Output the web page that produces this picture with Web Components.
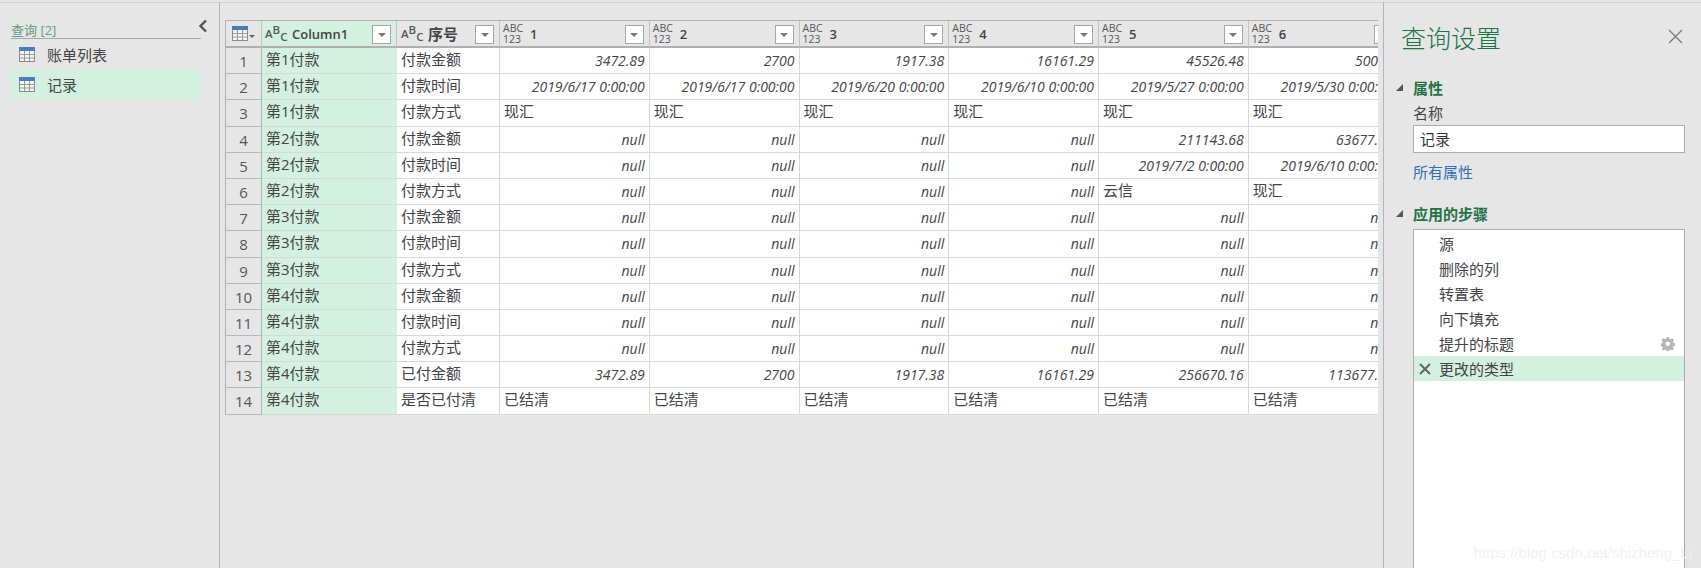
<!DOCTYPE html>
<html lang="zh">
<head>
<meta charset="utf-8">
<title>查询设置</title>
<style>
  html, body { margin: 0; height: 100%; overflow: hidden; background: #e6e6e6; }
  body { font-family: "Open Sans", "Noto Sans CJK SC", sans-serif; color: #444; }
  #app { display: flex; height: 568px; box-sizing: border-box; padding-top: 2px; }
</style>
</head>
<body>
<div id="app">
  <query-panel></query-panel>
  <query-grid></query-grid>
  <settings-panel></settings-panel>
</div>

<script>
const FONT = `"Open Sans", "Noto Sans CJK SC", sans-serif`;

class TableIcon extends HTMLElement {
    constructor() {
        super();
        this.attachShadow({ mode: 'open' });
        this.shadowRoot.innerHTML = `
            <style>
                :host { display: inline-block; width: 16px; height: 15px; line-height: 0; }
            </style>
            <svg width="16" height="15" viewBox="0 0 16 15">
                <rect x="0.5" y="0.5" width="15" height="14" fill="#f4f4f4" stroke="#8a8a8a"/>
                <rect x="0" y="0" width="16" height="4" fill="#4a7ebb"/>
                <path d="M0.5 7.500H15.500M0.500 11H15.500M5.500 4V14.500M10.500 4V14.500" stroke="#9a9a9a" fill="none"/>
            </svg>
        `;
    }
}
customElements.define('table-icon', TableIcon);

class QueryPanel extends HTMLElement {
    constructor() {
        super();
        this.attachShadow({ mode: 'open' });
        this.shadowRoot.innerHTML = `
            <style>
                :host {
                    display: block;
                    flex: none;
                    box-sizing: border-box;
                    width: 220px;
                    padding: 17px 18px 0 11px;
                    border-right: 1px solid #b4b4b4;
                    border-top: 1px solid #d0d0d0;
                    font: 15px ${FONT};
                }
                .head {
                    display: flex;
                    justify-content: space-between;
                    align-items: center;
                    height: 18px;
                    border-bottom: 1px solid #a9a9a9;
                    color: #5f9c7c;
                    font-size: 13px;
                }
                .head svg { margin: -7px -7px 0 0; }
                .item {
                    display: flex;
                    align-items: center;
                    gap: 12px;
                    height: 30px;
                    padding-left: 8px;
                    color: #444;
                }
                .item.sel { background: #d3f0e0; }
            </style>
            <div class="head">
                <span>查询 [2]</span>
                <svg width="10" height="14" viewBox="0 0 10 14"><path d="M8 1.500L2.500 7L8 12.500" fill="none" stroke="#555" stroke-width="2.400"/></svg>
            </div>
            <div class="item"><table-icon></table-icon><span>账单列表</span></div>
            <div class="item sel"><table-icon></table-icon><span>记录</span></div>
        `;
    }
}
customElements.define('query-panel', QueryPanel);

// one row per line of the table, the last six entries are columns 1..6
const ROWS = [
    ['第1付款', '付款金额', 3472.89, 2700, 1917.38, 16161.29, 45526.48, 50000],
    ['第1付款', '付款时间', '2019/6/17 0:00:00', '2019/6/17 0:00:00', '2019/6/20 0:00:00', '2019/6/10 0:00:00', '2019/5/27 0:00:00', '2019/5/30 0:00:00'],
    ['第1付款', '付款方式', '现汇', '现汇', '现汇', '现汇', '现汇', '现汇'],
    ['第2付款', '付款金额', null, null, null, null, 211143.68, 63677.32],
    ['第2付款', '付款时间', null, null, null, null, '2019/7/2 0:00:00', '2019/6/10 0:00:00'],
    ['第2付款', '付款方式', null, null, null, null, '云信', '现汇'],
    ['第3付款', '付款金额', null, null, null, null, null, null],
    ['第3付款', '付款时间', null, null, null, null, null, null],
    ['第3付款', '付款方式', null, null, null, null, null, null],
    ['第4付款', '付款金额', null, null, null, null, null, null],
    ['第4付款', '付款时间', null, null, null, null, null, null],
    ['第4付款', '付款方式', null, null, null, null, null, null],
    ['第4付款', '已付金额', 3472.89, 2700, 1917.38, 16161.29, 256670.16, 113677.32],
    ['第4付款', '是否已付清', '已结清', '已结清', '已结清', '已结清', '已结清', '已结清'],
];

const FILTER = `<span class="filter"><i></i></span>`;
const TYPE_TEXT = `<span class="abc">A<sup>B</sup><sub>C</sub></span>`;
const TYPE_ANY = `<span class="any">ABC<br>123</span>`;

function valueCell(value) {
    if (value === null) return `<div class="c num">null</div>`;
    if (typeof value === 'number' || /^\d{4}\//.test(value)) return `<div class="c num">${value}</div>`;
    return `<div class="c">${value}</div>`;
}

class QueryGrid extends HTMLElement {
    constructor() {
        super();
        this.attachShadow({ mode: 'open' });
        const heads = ['1', '2', '3', '4', '5', '6'].map(n =>
            `<div class="h">${TYPE_ANY}<b>${n}</b>${FILTER}</div>`).join('');
        const body = ROWS.map((row, i) => `
            <div class="n">${i + 1}</div>
            <div class="c key">${row[0]}</div>
            <div class="c">${row[1]}</div>
            ${row.slice(2).map(valueCell).join('')}
        `).join('');
        this.shadowRoot.innerHTML = `
            <style>
                :host {
                    display: block;
                    flex: none;
                    box-sizing: border-box;
                    width: 1164px;
                    padding: 17px 5px 0 5px;
                    border-right: 1px solid #b4b4b4;
                    border-top: 1px solid #d0d0d0;
                    font: 15px ${FONT};
                    color: #444;
                }
                .clip { width: 1153px; overflow: hidden; }
                .grid {
                    display: grid;
                    grid-template-columns: 36px 135px 103px repeat(6, 149.75px);
                    grid-template-rows: 27px repeat(14, 26.2px);
                    width: max-content;
                    border-left: 1px solid #b0b0b0;
                    border-top: 1px solid #b0b0b0;
                }
                .h, .corner {
                    display: flex;
                    align-items: center;
                    position: relative;
                    box-sizing: border-box;
                    background: #e6e6e6;
                    border-right: 1px solid #c4c4c4;
                    border-bottom: 2px solid #b0b0b0;
                    padding-left: 3px;
                    font-size: 13px;
                    color: #444;
                }
                .h.green { background: #d3f0e0; }
                .h b { font-weight: 600; margin-left: 7px; }
                .h.wide { padding-left: 4px; }
                .h.wide b { font-size: 15px; }
                .corner { padding-left: 6px; gap: 1px; }
                .corner i {
                    width: 0; height: 0; margin-top: 6px;
                    border: 3px solid transparent;
                    border-top: 3px solid #666; border-bottom: 0;
                }
                .abc { display: inline-flex; flex: none; align-items: center; font-size: 11.500px; font-weight: 600; width: 20px; color: #555; }
                .abc sup { font-size: 11.500px; margin-top: -7px; line-height: 1; vertical-align: baseline; }
                .abc sub { font-size: 11.500px; margin-top: 7px; line-height: 1; vertical-align: baseline; }
                .any { flex: none; font-size: 10.500px; line-height: 11px; color: #555; width: 20px; }
                .filter {
                    position: absolute;
                    right: 5px;
                    top: 4px;
                    width: 17px;
                    height: 17px;
                    background: #fff;
                    border: 1px solid #a6a6a6;
                    display: flex;
                    align-items: center;
                    justify-content: center;
                }
                .filter i {
                    width: 0; height: 0;
                    border: 4px solid transparent;
                    border-top: 4px solid #777; border-bottom: 0;
                }
                .n {
                    box-sizing: border-box;
                    text-align: center;
                    background: #e6e6e6;
                    border-right: 1px solid #b0b0b0;
                    border-bottom: 1px solid #b8b8b8;
                    line-height: 27px;
                    color: #555;
                }
                .c {
                    box-sizing: border-box;
                    background: #fff;
                    border-right: 1px solid #d8d8d8;
                    border-bottom: 1px solid #d8d8d8;
                    padding: 0 4px 0 4px;
                    line-height: 22px;
                    white-space: nowrap;
                    overflow: hidden;
                }
                .c.key { background: #d3f0e0; border-right-color: #d3f0e0; border-bottom-color: #d8d8d8; }
                .c.num { font-style: italic; text-align: right; font-size: 14px; line-height: 25px; }
            </style>
            <div class="clip">
                <div class="grid">
                    <div class="corner"><table-icon></table-icon><i></i></div>
                    <div class="h green">${TYPE_TEXT}<b>Column1</b>${FILTER}</div>
                    <div class="h wide">${TYPE_TEXT}<b>序号</b>${FILTER}</div>
                    ${heads}
                    ${body}
                </div>
            </div>
        `;
    }
}
customElements.define('query-grid', QueryGrid);

class SettingsPanel extends HTMLElement {
    constructor() {
        super();
        this.attachShadow({ mode: 'open' });
        this.shadowRoot.innerHTML = `
            <style>
                :host {
                    display: block;
                    flex: 1;
                    box-sizing: border-box;
                    min-width: 0;
                    height: 566px;
                    position: relative;
                    padding: 0 16px 0 29px;
                    border-top: 1px solid #d0d0d0;
                    font: 15px ${FONT};
                    color: #444;
                    overflow: hidden;
                }
                .title {
                    display: flex;
                    justify-content: space-between;
                    align-items: center;
                    height: 41px;
                    margin: 13px 2px 0 -12px;
                    color: #217346;
                    font-size: 25px;
                    font-weight: 300;
                }
                h3 {
                    position: relative;
                    margin: 21px 0 0;
                    font-size: 15px;
                    line-height: 20px;
                    font-weight: 700;
                    color: #217346;
                }
                h3::before {
                    content: "";
                    position: absolute;
                    left: -17px;
                    top: 6px;
                    border-style: solid;
                    border-width: 0 0 7px 7px;
                    border-color: transparent transparent #555 transparent;
                }
                .label { margin-top: 5px; line-height: 20px; }
                .name {
                    box-sizing: border-box;
                    height: 28px;
                    margin-top: 2px;
                    padding: 0 6px;
                    line-height: 26px;
                    background: #fff;
                    border: 1px solid #ababab;
                    color: #333;
                }
                .link { margin: 9px 0 22px; line-height: 20px; color: #2f6fb5; }
                .steps {
                    box-sizing: border-box;
                    height: 360px;
                    margin-top: 5px;
                    padding-top: 1px;
                    background: #fff;
                    border: 1px solid #ababab;
                }
                .step {
                    display: flex;
                    align-items: center;
                    position: relative;
                    height: 25px;
                    padding-left: 25px;
                }
                .step.sel { background: #d3f0e0; }
                .step svg { position: absolute; }
                .del { left: 5px; top: 7px; }
                .gear { right: 9px; top: 6px; }
                .mark {
                    position: absolute;
                    right: 9px;
                    bottom: 7px;
                    font: 15px "Liberation Sans", sans-serif;
                    color: #f1f1f1;
                }
            </style>
            <div class="title">
                <span>查询设置</span>
                <svg width="15" height="15" viewBox="0 0 15 15"><path d="M1 1L14 14M14 1L1 14" stroke="#777" stroke-width="1.200" fill="none"/></svg>
            </div>
            <h3>属性</h3>
            <div class="label">名称</div>
            <div class="name">记录</div>
            <div class="link">所有属性</div>
            <h3 style="margin-top:0">应用的步骤</h3>
            <div class="steps">
                <div class="step">源</div>
                <div class="step">删除的列</div>
                <div class="step">转置表</div>
                <div class="step">向下填充</div>
                <div class="step">提升的标题
                    <svg class="gear" width="14" height="14" viewBox="0 0 14 14"><path fill-rule="evenodd" fill="#b5b5b5" d="M5.700 0h2.600l.3 2 1.300.6L11.600 1.400l1.800 1.800-1.200 1.700.6 1.300 2 .3v2.600l-2 .3-.6 1.300 1.200 1.700-1.800 1.800-1.700-1.200-1.300.6-.3 2H5.700l-.3-2-1.300-.6-1.700 1.200L.6 12.900l1.200-1.700-.6-1.300-2-.3V7l2-.3.6-1.300L.6 3.200 2.400 1.400l1.700 1.200 1.300-.6zM7 4.800a2.400 2.400 0 1 0 0 4.800 2.400 2.400 0 0 0 0-4.800z" transform="translate(0 -.2) scale(.97)"/></svg>
                </div>
                <div class="step sel">
                    <svg class="del" width="12" height="12" viewBox="0 0 12 12"><path d="M1 1L11 11M11 1L1 11" stroke="#666" stroke-width="2" fill="none"/></svg>
                    更改的类型
                </div>
            </div>
            <div class="mark">https://blog.csdn.net/shizheng_Li</div>
        `;
    }
}
customElements.define('settings-panel', SettingsPanel);
</script>
</body>
</html>
